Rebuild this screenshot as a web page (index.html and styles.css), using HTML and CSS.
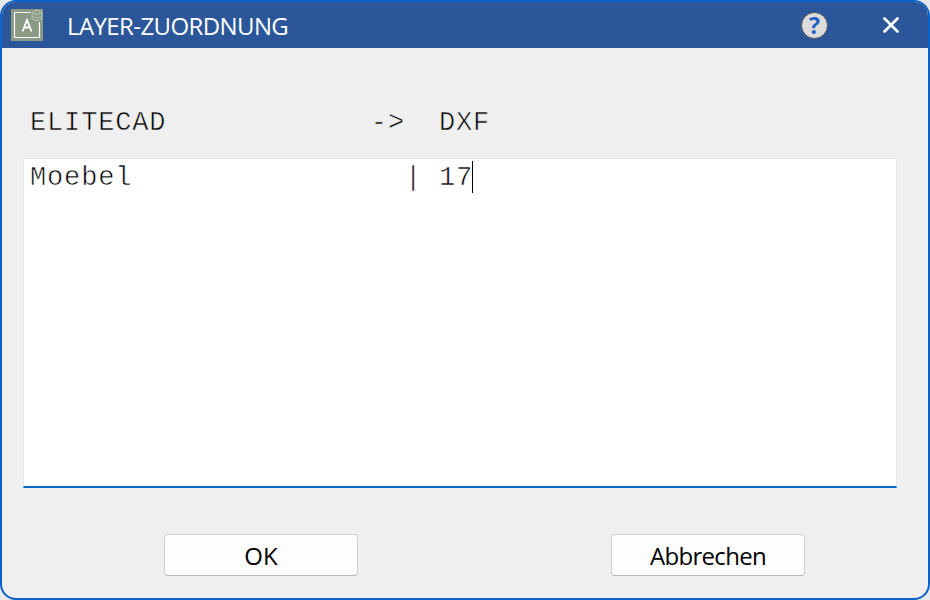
FILE: index.html
```html
<!DOCTYPE html>
<html lang="de">
<head>
    <meta charset="UTF-8">
    <meta name="viewport" content="width=device-width, initial-scale=1.0">
    <title>LAYER-ZUORDNUNG</title>
    <link rel="stylesheet" href="styles.css">
</head>
<body>
    <div class="dialog">
        <header class="titlebar">
            <svg class="app-icon" width="32" height="32" viewBox="0 0 32 32">
                <rect width="32" height="32" fill="#8a9a84"/>
                <path d="M19.500 3.500h-16v25h25V13" fill="none" stroke="#fff" stroke-width="1.200"/>
                <path d="M11.500 22.500l4.500-11.500 4.500 11.500M13 18.500h6" fill="none" stroke="#fff" stroke-width="1.800"/>
                <path d="M26 1l4.800 2.500v6L26 12l-4.800-2.500v-6zM22.500 4l3.500 1.500 3.500-1.500M22.500 7.500L26 9l3.500-1.500" fill="none" stroke="#c3ccbf" stroke-width="0.900"/>
            </svg>
            <h1 class="title">LAYER-ZUORDNUNG</h1>
            <button class="help-button" aria-label="Hilfe">?</button>
            <button class="close-button" aria-label="Schließen">
                <svg width="16" height="16" viewBox="0 0 16 16">
                    <path d="M1.500 1.500l13 13M14.500 1.500l-13 13" stroke="#fff" stroke-width="2.700" stroke-linecap="round"/>
                </svg>
            </button>
        </header>
        <main class="content">
            <pre class="mono column-head">ELITECAD            -&gt;  DXF</pre>
            <div class="layer-list">
                <pre class="mono">Moebel                | 17</pre><span class="caret"></span>
            </div>
            <div class="actions">
                <button class="action-button">OK</button>
                <button class="action-button cancel">Abbrechen</button>
            </div>
        </main>
    </div>
</body>
</html>
```

FILE: styles.css
```css
* {
    box-sizing: border-box;
}

body {
    margin: 0;
    background: #e6e8ea;
    font-family: "Open Sans", "Noto Sans", sans-serif;
    overflow: hidden;
}

.dialog {
    width: 930px;
    height: 600px;
    background: #efefef;
    border: 2px solid #0c63c7;
    border-radius: 16px;
    overflow: hidden;
}

button {
    padding: 0;
    font-family: inherit;
}

.titlebar {
    display: flex;
    align-items: center;
    height: 46px;
    padding: 0 28px 0 9px;
    background: #2b579a;
}

.title {
    flex: 1;
    margin: 2px 0 0 24px;
    color: #fff;
    font-size: 24px;
    font-weight: 400;
    letter-spacing: -0.6px;
    line-height: 30px;
    white-space: nowrap;
}

.help-button {
    width: 27px;
    height: 27px;
    margin-right: 54px;
    border: 1px solid #555;
    border-radius: 50%;
    background: #dcdcdc;
    color: #2461c5;
    font-size: 23px;
    font-weight: 700;
    line-height: 24px;
}

.close-button {
    width: 18px;
    height: 18px;
    border: 0;
    background: none;
}

.close-button svg {
    display: block;
    margin: 1px;
}

.content {
    padding: 59px 31px 0 21px;
}

.mono {
    margin: 0;
    font-family: "Courier New", "Liberation Mono", monospace;
    font-size: 27px;
    letter-spacing: 0.84px;
    line-height: 32px;
    -webkit-text-stroke: 0.6px #efefef;
}

.column-head {
    padding-left: 7px;
}

.layer-list {
    display: flex;
    align-items: flex-start;
    height: 330px;
    margin-top: 19px;
    padding: 2px 0 0 6px;
    background: #fff;
    border: 1px solid #e6e8ec;
    border-bottom: 2px solid #0067c0;
}

.layer-list .mono {
    padding-top: 1px;
    -webkit-text-stroke-color: #fff;
}

.caret {
    width: 1px;
    height: 32px;
    margin-left: -1px;
    background: #000;
}

.actions {
    display: flex;
    justify-content: space-between;
    margin-top: 46px;
    padding: 0 92px 0 141px;
}

.action-button {
    width: 194px;
    height: 42px;
    padding-bottom: 0;
    border: 1px solid #d0d0d0;
    border-bottom-color: #b9b9b9;
    border-radius: 4px;
    background: #fdfdfd;
    color: #000;
    font-size: 24px;
}

.cancel {
    letter-spacing: -0.7px;
}
```
